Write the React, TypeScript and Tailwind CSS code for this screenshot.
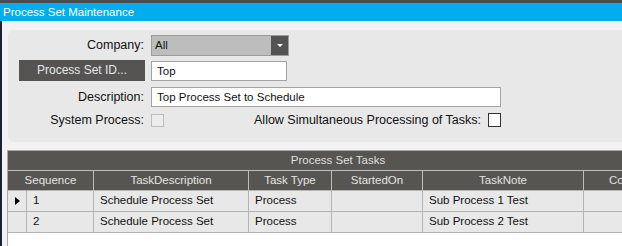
const font = "font-['Liberation_Sans',Arial,sans-serif]";

type Row = { seq: string; desc: string; type: string; started: string; note: string };

const rows: Row[] = [
  { seq: "1", desc: "Schedule Process Set", type: "Process", started: "", note: "Sub Process 1 Test" },
  { seq: "2", desc: "Schedule Process Set", type: "Process", started: "", note: "Sub Process 2 Test" },
];

const cols = [
  { label: "Sequence", w: "w-[86px]" },
  { label: "TaskDescription", w: "w-[155px]" },
  { label: "Task Type", w: "w-[83px]" },
  { label: "StartedOn", w: "w-[91px]" },
  { label: "TaskNote", w: "w-[161px]" },
  { label: "Company", w: "w-[100px]" },
];

const FieldLabel = ({ children }: { children: React.ReactNode }) => (
  <div className="w-[137px] pr-[1px] text-right text-[12.5px] text-[#111]">{children}</div>
);

export default function App() {
  return (
    <div className={`${font} w-[622px] h-[246px] overflow-hidden flex flex-col bg-[#f2f2f4]`}>
      <div className="h-[3px] bg-[#4d4d4d]" />
      <div className="h-[18px] bg-[#00adef] pl-[3px] text-[11.5px] leading-[18px] text-white">
        Process Set Maintenance
      </div>
      <div className="flex-1 flex flex-col border-l-2 border-[#1b2230]">
        <div className="pl-[6px] pt-[9px]">
          <div className="h-[112px] bg-[#e8e8e8] rounded-l-[6px] pt-[5px] flex flex-col">
            {/* Company */}
            <div className="flex items-center h-[21px]">
              <FieldLabel>Company:</FieldLabel>
              <div className="ml-[6px] w-[138px] h-[21px] flex border border-[#9c9c9c] bg-[#bdbdbd]">
                <div className="flex-1 pl-[3px] text-[11.5px] leading-[19px] text-[#111]">All</div>
                <div className="w-[17px] bg-[#545454] flex items-center justify-center">
                  <div className="w-0 h-0 border-l-[3px] border-r-[3px] border-t-[3px] border-l-transparent border-r-transparent border-t-white" />
                </div>
              </div>
            </div>
            {/* Process Set ID */}
            <div className="flex items-center h-[21px] mt-[4px]">
              <div className="ml-[11px] w-[126px] h-[21px] bg-[#555453] text-[#e6e6e6] text-[12px] leading-[21px] text-center">
                Process Set ID...
              </div>
              <div className="ml-[6px] w-[136px] h-[20px] bg-white border border-[#a3a3a3] pl-[5px] text-[11.5px] leading-[18px] text-[#111]">
                Top
              </div>
            </div>
            {/* Description */}
            <div className="flex items-center h-[20px] mt-[6px]">
              <FieldLabel>Description:</FieldLabel>
              <div className="ml-[6px] w-[350px] h-[20px] bg-white border border-[#a3a3a3] pl-[5px] text-[11.5px] leading-[18px] text-[#111]">
                Top Process Set to Schedule
              </div>
            </div>
            {/* Checkboxes */}
            <div className="flex items-center h-[14px] mt-[6px]">
              <FieldLabel>System Process:</FieldLabel>
              <div className="ml-[6px] w-[350px] flex items-center justify-between">
                <div className="w-[13px] h-[13px] border border-[#bdbdbd] bg-[#ececec]" />
                <div className="flex items-center">
                  <span className="text-[12.5px] text-[#111]">Allow Simultaneous Processing of Tasks:</span>
                  <div className="ml-[7px] w-[13px] h-[14px] border border-[#333] bg-white" />
                </div>
              </div>
            </div>
          </div>
        </div>
        {/* Grid */}
        <div className="mt-[8px] ml-[5px] flex-1 bg-white border-l border-t border-[#a9a9a9] w-[700px]">
          <div className="w-[660px] h-[19px] bg-[#575552] text-center text-[11.5px] leading-[19px] text-[#dedede]">
            Process Set Tasks
          </div>
          <div className="flex h-[20px] bg-[#575552] border-t border-[#bdbdbd]">
            {cols.map((c) => (
              <div
                key={c.label}
                className={`${c.w} shrink-0 border-r border-[#bdbdbd] text-center text-[11.5px] leading-[19px] text-[#e4e4e4]`}
              >
                {c.label}
              </div>
            ))}
          </div>
          {rows.map((r, i) => (
            <div key={r.seq} className="flex h-[21px] bg-[#e8e8e8] border-t border-[#b4b4b4] text-[11.5px] leading-[19px] text-[#111]">
              <div className="w-[19px] shrink-0 border-r border-[#b4b4b4] flex items-center justify-center">
                {i === 0 && (
                  <div className="w-0 h-0 border-t-[4.5px] border-b-[4.5px] border-l-[5px] border-t-transparent border-b-transparent border-l-black" />
                )}
              </div>
              <div className="w-[67px] shrink-0 border-r border-[#b4b4b4] pl-[6px]">{r.seq}</div>
              <div className="w-[155px] shrink-0 border-r border-[#b4b4b4] pl-[6px]">{r.desc}</div>
              <div className="w-[83px] shrink-0 border-r border-[#b4b4b4] pl-[6px]">{r.type}</div>
              <div className="w-[91px] shrink-0 border-r border-[#b4b4b4] pl-[6px]">{r.started}</div>
              <div className="w-[161px] shrink-0 border-r border-[#b4b4b4] pl-[6px]">{r.note}</div>
              <div className="w-[100px] shrink-0 border-r border-[#b4b4b4]" />
            </div>
          ))}
          <div className="h-px w-[663px] bg-[#b4b4b4]" />
        </div>
      </div>
    </div>
  );
}
